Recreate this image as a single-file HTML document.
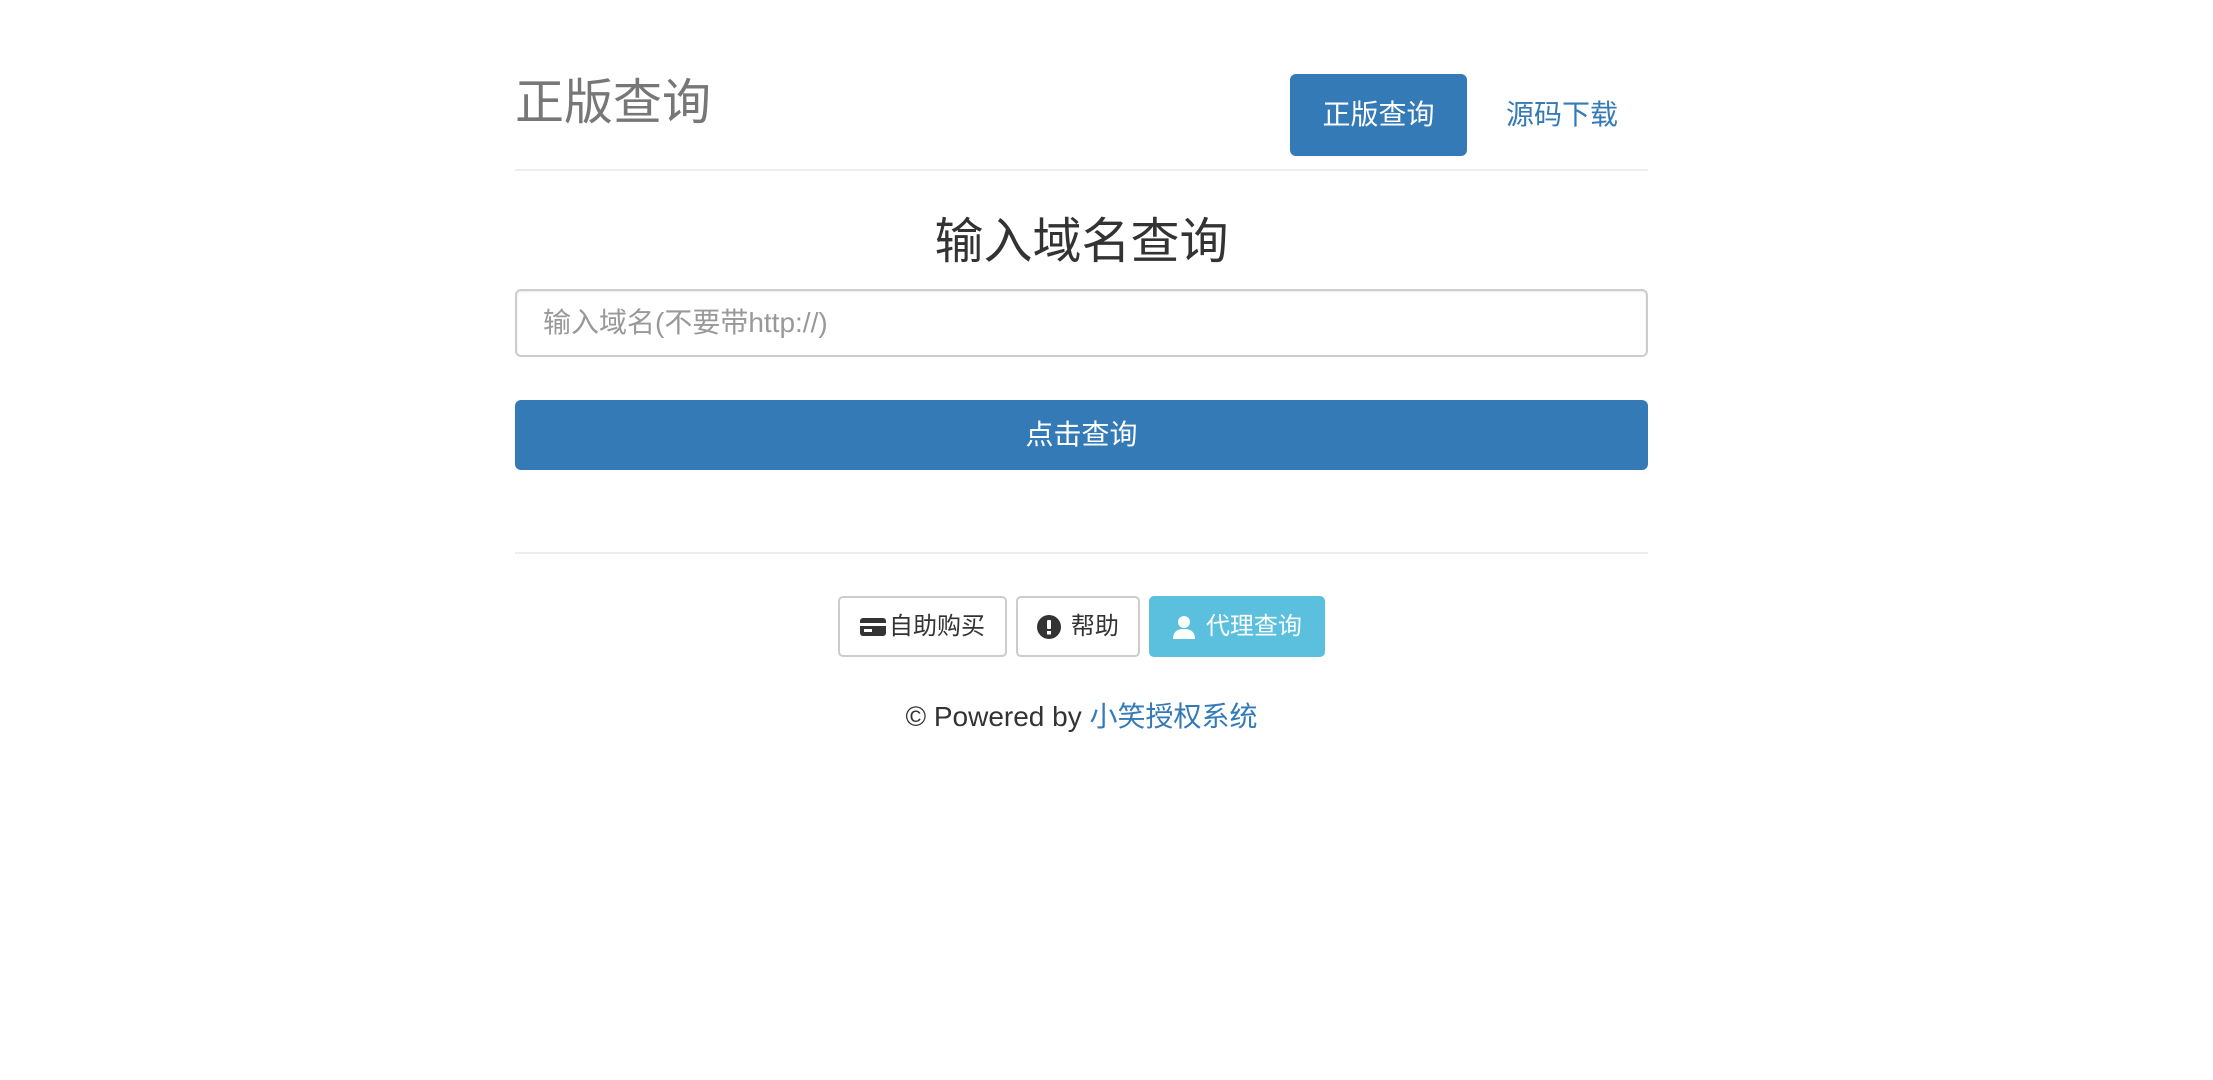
<!DOCTYPE html>
<html><head><meta charset="utf-8"><style>
*{box-sizing:border-box;margin:0;padding:0}
body{width:2213px;height:1080px;background:#fff;font-family:"Liberation Sans","Noto Sans CJK SC",sans-serif;color:#333;position:relative;overflow:hidden}
.a{position:absolute}
.title{left:515px;top:73px;font-size:49px;line-height:60px;color:#777}
.pill{left:1290px;top:74px;width:177px;height:82px;background:#337ab7;border-radius:6px;color:#fff;font-size:28px;line-height:82px;text-align:center}
.link{left:1482px;top:74px;width:160px;height:82px;color:#337ab7;font-size:28px;line-height:82px;text-align:center}
.hr{left:515px;width:1133px;height:2px;background:#eee}
.h{left:515px;width:1133px;top:212px;text-align:center;font-size:49px;line-height:60px;color:#333}
.inp{left:515px;top:289px;width:1133px;height:68px;border:2px solid #ccc;border-radius:6px;font-size:28px;line-height:64px;padding-left:26px;color:#999;box-shadow:inset 0 1px 2px rgba(0,0,0,.08)}
.btn{left:515px;top:400px;width:1133px;height:70px;background:#337ab7;border-radius:6px;color:#fff;font-size:28px;line-height:70px;text-align:center}
.sb{top:596px;height:61px;border:2px solid #ccc;border-radius:5px;font-size:24px;line-height:57px;text-align:center;color:#333;display:flex;align-items:center;justify-content:center;gap:3px}
.foot{left:515px;width:1133px;top:697px;text-align:center;font-size:28px;line-height:40px;color:#333}
.foot span{color:#337ab7}
</style></head><body>
<div class="a title">正版查询</div>
<div class="a pill">正版查询</div>
<div class="a link">源码下载</div>
<div class="a hr" style="top:169px"></div>
<div class="a h">输入域名查询</div>
<div class="a inp">输入域名(不要带http://)</div>
<div class="a btn">点击查询</div>
<div class="a hr" style="top:552px"></div>
<div class="a sb" style="left:838px;width:169px"><svg width="26" height="20" viewBox="0 0 26 20"><rect x="0" y="1" width="26" height="18" rx="3" fill="#333"/><rect x="0" y="6" width="26" height="3" fill="#fff"/><rect x="4" y="12" width="8" height="3" fill="#fff"/></svg>自助购买</div>
<div class="a sb" style="left:1016px;width:124px"><svg width="24" height="24" viewBox="0 0 24 24"><circle cx="12" cy="12" r="12" fill="#333"/><rect x="10" y="5" width="4" height="9" rx="1" fill="#fff"/><rect x="10" y="16" width="4" height="3.5" fill="#fff"/></svg>&nbsp;帮助</div>
<div class="a sb" style="left:1149px;width:176px;background:#5bc0de;border-color:#5bc0de;color:#fff"><svg width="24" height="24" viewBox="0 0 24 24"><circle cx="12" cy="7" r="6" fill="#fff"/><path d="M1 24c0-7 4-10 11-10s11 3 11 10z" fill="#fff"/></svg>&nbsp;代理查询</div>
<div class="a foot">© Powered by <span>小笑授权系统</span></div>
</body></html>
